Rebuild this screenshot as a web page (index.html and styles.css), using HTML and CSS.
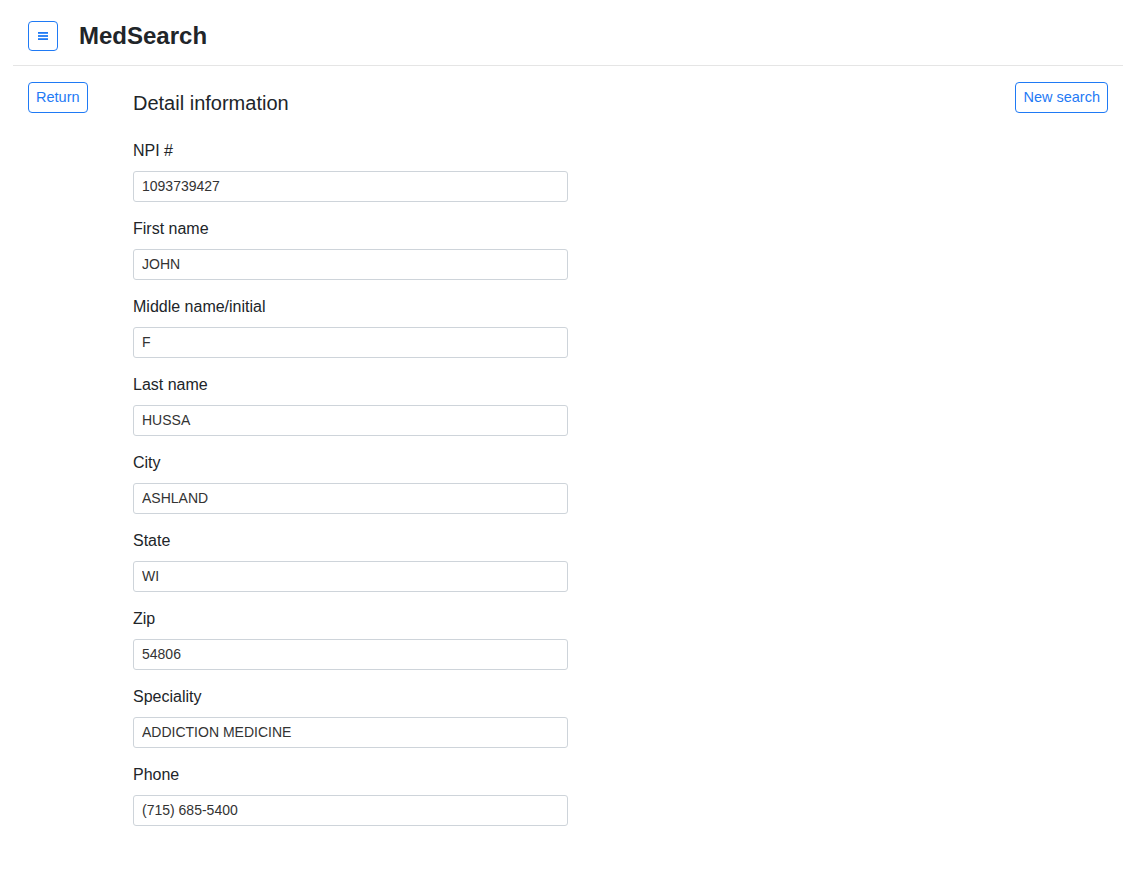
FILE: index.html
```html
<!DOCTYPE html>
<html>
<head>
<meta charset="utf-8">
<link rel="stylesheet" href="styles.css">
</head>
<body>
<header class="topbar">
  <div class="topbar-row">
    <button class="menu-btn" aria-label="menu">
      <svg width="12" height="10" viewBox="0 0 12 10"><rect x="1" y="1" width="10" height="1.8" fill="#1f7af5"/><rect x="1" y="4.1" width="10" height="1.8" fill="#1f7af5"/><rect x="1" y="7.2" width="10" height="1.8" fill="#1f7af5"/></svg>
    </button>
    <h1 class="brand">MedSearch</h1>
  </div>
  <div class="divider"></div>
</header>
<main class="page">
  <div class="side-left"><button class="btn">Return</button></div>
  <section class="content">
    <h2 class="heading">Detail information</h2>
    <div class="field"><label>NPI #</label><input type="text" value="1093739427" readonly></div>
    <div class="field"><label>First name</label><input type="text" value="JOHN" readonly></div>
    <div class="field"><label>Middle name/initial</label><input type="text" value="F" readonly></div>
    <div class="field"><label>Last name</label><input type="text" value="HUSSA" readonly></div>
    <div class="field"><label>City</label><input type="text" value="ASHLAND" readonly></div>
    <div class="field"><label>State</label><input type="text" value="WI" readonly></div>
    <div class="field"><label>Zip</label><input type="text" value="54806" readonly></div>
    <div class="field"><label>Speciality</label><input type="text" value="ADDICTION MEDICINE" readonly></div>
    <div class="field"><label>Phone</label><input type="text" value="(715) 685-5400" readonly></div>
  </section>
  <div class="side-right"><button class="btn">New search</button></div>
</main>
</body>
</html>
```
FILE: styles.css
```css
* { box-sizing: border-box; }
body {
  margin: 0;
  font-family: "Liberation Sans", Arial, sans-serif;
  color: #212529;
  background: #fff;
}
.topbar { padding: 21px 17px 0 13px; }
.topbar-row {
  display: flex;
  align-items: center;
  padding: 0 15px;
  height: 30px;
}
.menu-btn {
  width: 30px;
  height: 30px;
  border: 1px solid #1f7af5;
  border-radius: 4px;
  background: #fff;
  padding: 0;
  display: flex;
  align-items: center;
  justify-content: center;
}
.brand {
  margin: 0 0 0 21px;
  font-size: 24px;
  font-weight: bold;
  line-height: 30px;
  color: #212529;
}
.divider {
  margin-top: 14px;
  border-top: 1px solid #e5e5e5;
}
.page {
  display: flex;
  align-items: flex-start;
  padding: 16px 32px 40px 28px;
}
.side-left { width: 105px; }
.side-right { margin-left: auto; }
.btn {
  font-family: "Liberation Sans", Arial, sans-serif;
  font-size: 14.5px;
  color: #1f7af5;
  background: #fff;
  border: 1px solid #1f7af5;
  border-radius: 4px;
  height: 31px;
  padding: 0 7px;
  line-height: 29px;
}
.content { width: 435px; }
.heading {
  margin: 9px 0 23px;
  font-size: 20px;
  font-weight: normal;
  line-height: 24px;
  color: #212529;
}
.field { display: flex; flex-direction: column; margin-bottom: 14px; }
.field label {
  font-size: 16px;
  line-height: 24px;
  margin-top: 1px;
  margin-bottom: 8px;
}
.field input {
  height: 31px;
  width: 435px;
  border: 1px solid #ced4da;
  border-radius: 3px;
  padding: 0 8px 2px;
  font-family: "Liberation Sans", Arial, sans-serif;
  font-size: 14px;
  color: #333;
  background: #fff;
  outline: none;
}
```
